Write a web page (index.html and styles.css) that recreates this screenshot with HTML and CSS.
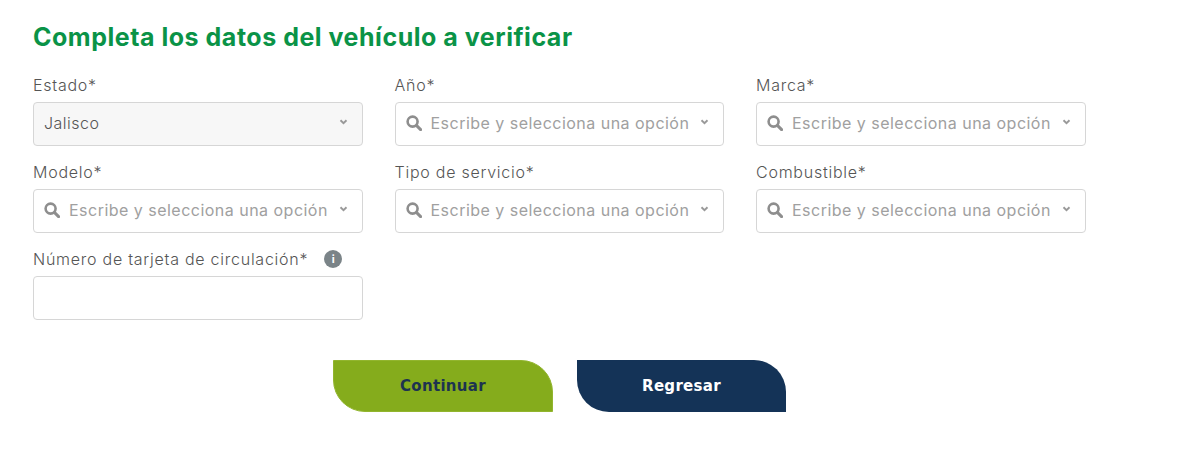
FILE: index.html
```html
<!DOCTYPE html>
<html lang="es">
<head>
    <meta charset="UTF-8">
    <title>Datos del vehículo</title>
    <link rel="stylesheet" href="styles.css">
</head>
<body>
    <svg class="icon-defs" width="0" height="0">
        <symbol id="search" viewBox="0 0 16 16">
            <circle cx="6.6" cy="6.6" r="5" fill="none" stroke="currentColor" stroke-width="2.6"/>
            <path d="M10.6 10.6L14.6 14.6" fill="none" stroke="currentColor" stroke-width="3" stroke-linecap="round"/>
        </symbol>
        <symbol id="chevron" viewBox="0 0 10 7">
            <path d="M1.5 1.5L5 5L8.5 1.5" fill="none" stroke="currentColor" stroke-width="2.2"/>
        </symbol>
    </svg>

    <form class="container">
        <h1>Completa los datos del vehículo a verificar</h1>

        <div class="fields">
            <div class="field">
                <label>Estado*</label>
                <div class="select disabled">
                    <span class="value">Jalisco</span>
                    <svg class="chevron"><use href="#chevron"/></svg>
                </div>
            </div>
            <div class="field">
                <label>Año*</label>
                <div class="select">
                    <svg class="search"><use href="#search"/></svg>
                    <span class="placeholder">Escribe y selecciona una opción</span>
                    <svg class="chevron"><use href="#chevron"/></svg>
                </div>
            </div>
            <div class="field">
                <label>Marca*</label>
                <div class="select">
                    <svg class="search"><use href="#search"/></svg>
                    <span class="placeholder">Escribe y selecciona una opción</span>
                    <svg class="chevron"><use href="#chevron"/></svg>
                </div>
            </div>
            <div class="field">
                <label>Modelo*</label>
                <div class="select">
                    <svg class="search"><use href="#search"/></svg>
                    <span class="placeholder">Escribe y selecciona una opción</span>
                    <svg class="chevron"><use href="#chevron"/></svg>
                </div>
            </div>
            <div class="field">
                <label>Tipo de servicio*</label>
                <div class="select">
                    <svg class="search"><use href="#search"/></svg>
                    <span class="placeholder">Escribe y selecciona una opción</span>
                    <svg class="chevron"><use href="#chevron"/></svg>
                </div>
            </div>
            <div class="field">
                <label>Combustible*</label>
                <div class="select">
                    <svg class="search"><use href="#search"/></svg>
                    <span class="placeholder">Escribe y selecciona una opción</span>
                    <svg class="chevron"><use href="#chevron"/></svg>
                </div>
            </div>
            <div class="field">
                <label>Número de tarjeta de circulación*<span class="info">i</span></label>
                <div class="select"></div>
            </div>
        </div>

        <div class="actions">
            <button type="button" class="btn btn-continue">Continuar</button>
            <button type="button" class="btn btn-back">Regresar</button>
        </div>
    </form>
</body>
</html>
```

FILE: styles.css
```css
:root {
    --green: #0a9347;
    --lime: #85ac1c;
    --navy: #143357;
    --text: #555;
    --muted: #a0a0a0;
    --border: #d6d6d6;
}

body {
    margin: 0;
    background: #fff;
    font-family: Inter, "Open Sans", sans-serif;
    color: var(--text);
}

.icon-defs {
    display: block;
    height: 0;
}

.container {
    padding: 23px 0 0 33px;
    width: 1053px;
}

h1 {
    margin: 0 0 24px;
    color: var(--green);
    font-size: 25px;
    line-height: 29px;
    font-weight: 700;
    letter-spacing: 0.52px;
}

.fields {
    display: grid;
    grid-template-columns: repeat(3, 329.5px);
    column-gap: 32px;
    row-gap: 17px;
}

label {
    display: flex;
    align-items: center;
    box-sizing: border-box;
    height: 26px;
    padding-bottom: 8px;
    font-size: 16px;
    font-weight: 300;
    letter-spacing: 0.75px;
    white-space: nowrap;
}

.info {
    display: inline-flex;
    justify-content: center;
    align-items: center;
    width: 18px;
    height: 18px;
    margin-left: 16px;
    border-radius: 50%;
    background: #7b8488;
    color: #fff;
    font-size: 11px;
    font-weight: 700;
    letter-spacing: 0;
}

.select {
    display: flex;
    align-items: center;
    box-sizing: border-box;
    height: 44px;
    padding: 0 14px 2px 10px;
    border: 1px solid var(--border);
    border-radius: 4px;
    background: #fff;
    font-size: 16px;
    font-weight: 300;
    letter-spacing: 0.48px;
}

.select.disabled {
    background: #f7f7f7;
}

.value {
    flex: 1;
}

.placeholder {
    flex: 1;
    color: var(--muted);
    font-weight: 400;
    white-space: nowrap;
}

.search {
    width: 16px;
    height: 16px;
    margin-right: 9px;
    color: #8e8e8e;
}

.chevron {
    width: 9px;
    height: 6px;
    margin-bottom: 3px;
    color: #999;
}

.actions {
    display: flex;
    gap: 24px;
    margin: 40px 0 0 300px;
}

.btn {
    height: 52px;
    padding: 0;
    border: none;
    border-radius: 0 32px 0 32px;
    font-family: "DejaVu Sans", sans-serif;
    font-size: 15px;
    font-weight: 700;
    letter-spacing: 0.3px;
    cursor: pointer;
}

.btn-continue {
    width: 220px;
    border: 1px solid #92b52e;
    background: var(--lime);
    color: #1d3350;
}

.btn-back {
    width: 209px;
    background: var(--navy);
    color: #fff;
}
```
